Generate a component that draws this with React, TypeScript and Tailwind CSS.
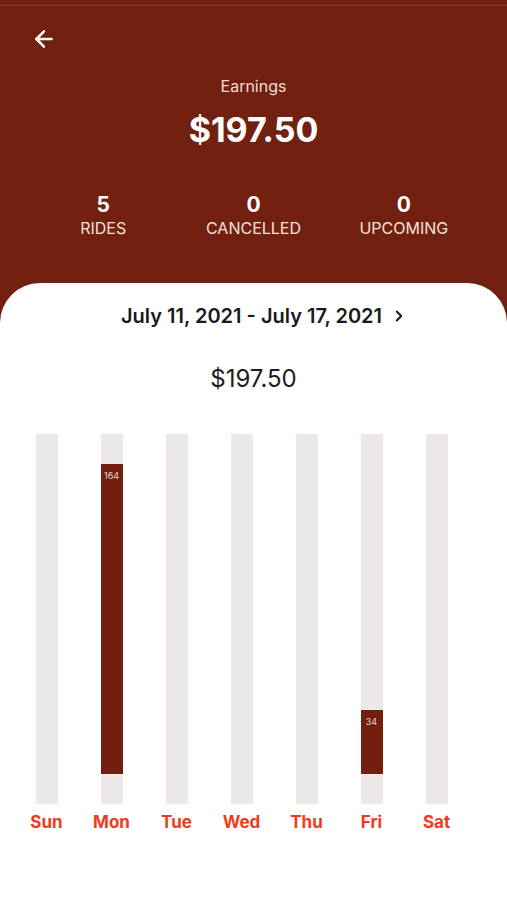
import { ArrowLeft, ChevronRight } from "lucide-react";

const days = [
  { d: "Sun", v: 0 },
  { d: "Mon", v: 164 },
  { d: "Tue", v: 0 },
  { d: "Wed", v: 0 },
  { d: "Thu", v: 0 },
  { d: "Fri", v: 34 },
  { d: "Sat", v: 0 },
];

export default function App() {
  return (
    <div className="w-full min-h-[900px] bg-[#722010] flex flex-col font-['Inter',sans-serif]">
      {/* top hairline */}
      <div className="h-[5px]" />
      <div className="h-px bg-[#8e3d2c]" />

      <div className="px-[31px] pt-[20px] h-[50px]">
        <ArrowLeft className="w-[26px] h-[26px] text-white" strokeWidth={2.3} />
      </div>

      <div className="flex flex-col items-center text-white">
        <div className="text-[16px] text-[#f1dcd6] leading-[20px] mt-[20px]">Earnings</div>
        <div className="text-[34px] font-bold leading-[40px] mt-[14px]">$197.50</div>
      </div>

      <div className="grid grid-cols-3 px-[28px] mt-[43px] text-white">
        {[
          ["5", "RIDES"],
          ["0", "CANCELLED"],
          ["0", "UPCOMING"],
        ].map(([n, l]) => (
          <div key={l} className="flex flex-col items-center">
            <div className="text-[21px] font-bold leading-[24px]">{n}</div>
            <div className="text-[16px] text-[#f3e2dd] leading-[20px] mt-[1px]">{l}</div>
          </div>
        ))}
      </div>

      <div className="flex-1 bg-white rounded-t-[40px] mt-[45px] flex flex-col">
        <div className="flex justify-center items-center mt-[21px]">
          <div className="w-[22px]" />
          <div className="text-[20px] font-semibold text-[#1a1a1a] leading-[24px]">
            July 11, 2021 - July 17, 2021
          </div>
          <ChevronRight className="w-[18px] h-[18px] text-[#1a1a1a] ml-[8px]" strokeWidth={2.6} />
        </div>

        <div className="text-center text-[24px] text-[#1d1d1d] leading-[28px] mt-[37px]">$197.50</div>

        <div className="grid grid-cols-7 pl-[14px] pr-[38px] mt-[41px]">
          {days.map((x) => (
            <div key={x.d} className="flex flex-col items-center">
              <div className="w-[22px] h-[370px] bg-[#ece9e8] flex flex-col justify-end pb-[30px]">
                {x.v > 0 && (
                  <div
                    className="w-full bg-[#731f0f] flex justify-center pt-[6px]"
                    style={{ height: `${Math.round(x.v * 1.89)}px` }}
                  >
                    <span className="text-[9px] leading-[12px] text-[#e8d8d4]">{x.v}</span>
                  </div>
                )}
              </div>
              <div className="text-[17px] font-bold text-[#ef3b1c] leading-[22px] mt-[7px]">{x.d}</div>
            </div>
          ))}
        </div>
      </div>
    </div>
  );
}
